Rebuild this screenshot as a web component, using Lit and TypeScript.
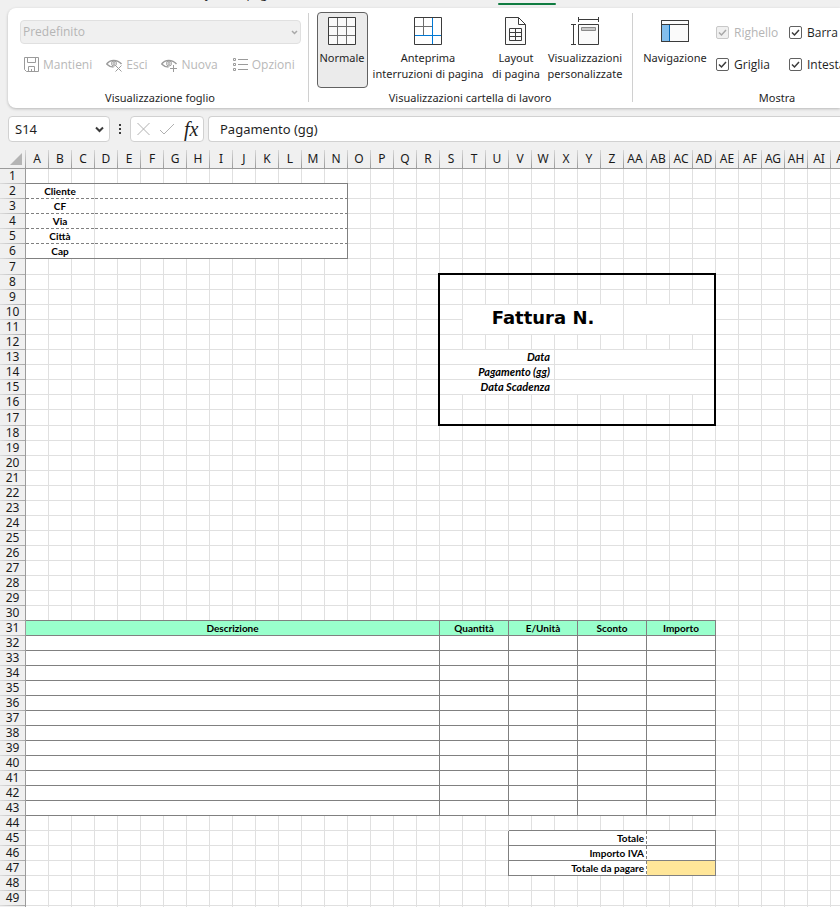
import { LitElement, html, css, svg, nothing } from "lit";
import { customElement } from "lit/decorators.js";
import { classMap } from "lit/directives/class-map.js";

type Cell = { c: number; span: number; rows?: number; text?: string; cls?: string };

const COLS = 36;

const colName = (n: number): string =>
  n > 26 ? "A" + String.fromCharCode(64 + n - 26) : String.fromCharCode(64 + n);

const merged: Record<number, Cell[]> = {};
const put = (row: number, ...cells: Cell[]) => {
  merged[row] = [...(merged[row] ?? []), ...cells];
};

["Cliente", "CF", "Via", "Città", "Cap"].forEach((text, i) => {
  const edge = i === 4 ? "solid-b" : "dash-b";
  put(2 + i, { c: 1, span: 3, text, cls: `center ${edge}` }, { c: 4, span: 11, cls: `${edge} solid-r` });
});
put(10, { c: 20, span: 7, rows: 2, text: "Fattura N.", cls: "title" }, { c: 27, span: 4, rows: 2, cls: "thick-r" });
["Data", "Pagamento (gg)", "Data Scadenza"].forEach((text, i) =>
  put(13 + i, { c: 19, span: 5, text, cls: "right italic" }, { c: 24, span: 7, cls: "thick-r" })
);
for (let r = 31; r <= 43; r++) {
  const head = r === 31;
  ["Descrizione", "Quantità", "E/Unità", "Sconto", "Importo"].forEach((text, i) =>
    put(r, {
      c: i ? 16 + i * 3 : 1,
      span: i ? 3 : 18,
      text: head ? text : undefined,
      cls: `center solid-b solid-r${head ? " mint" : ""}`,
    })
  );
}
["Totale", "Importo IVA", "Totale da pagare"].forEach((text, i) =>
  put(
    45 + i,
    { c: 22, span: 6, text, cls: "right solid-b dash-r" },
    { c: 28, span: 3, cls: `solid-b solid-r${i === 2 ? " amber" : ""}` }
  )
);

/* Borders that plain cells carry on behalf of a neighbouring block. */
const edges = (r: number, c: number): string => {
  const out: string[] = [];
  if (r === 1 && c <= 14) out.push("solid-b");
  if (r === 30 && c <= 30) out.push("solid-b");
  if (r === 44 && c >= 22 && c <= 30) out.push("solid-b");
  if (r >= 45 && r <= 47 && c === 21) out.push("solid-r");
  if ((r === 7 || r === 17) && c >= 19 && c <= 30) out.push("thick-b");
  if (r >= 8 && r <= 17 && (c === 18 || c === 30)) out.push("thick-r");
  if (r === 7 && c === 18) out.push("corner");
  return out.join(" ");
};

const rowCells = (r: number) => {
  const out: unknown[] = [];
  for (let c = 1; c <= COLS; ) {
    if (r === 11 && c === 20) {
      c = 31;
      continue;
    }
    const m = merged[r]?.find((x) => x.c === c);
    if (m) {
      out.push(html`<td class=${m.cls ?? ""} colspan=${m.span} rowspan=${m.rows ?? 1}>${m.text ?? nothing}</td>`);
      c += m.span;
    } else {
      out.push(html`<td class=${edges(r, c)}></td>`);
      c++;
    }
  }
  return out;
};

const icons = {
  save: svg`<path d="M1.500 1.500h14v14h-12l-2-2zM4.500 1.500v5h8v-5M5.500 15.500v-5h6v5M8.500 13v2.500" />`,
  eye: svg`<path stroke-width="1.500" d="M.5 8C4 3.500 11 3 15.500 8M.5 8c2 2 4 3 7 3" /><circle cx="8" cy="7.500" r="2.500" /><circle cx="8" cy="7.500" r="1" />`,
  list: svg`<path d="M1.500 2.500h2v2h-2zM1.500 7.500h2v2h-2zM1.500 12.500h2v2h-2zM6 3.500h10M6 8.500h10M6 13.500h10" />`,
};

@customElement("app-root")
export class AppRoot extends LitElement {
  static styles = css`
    :host {
      display: block;
      height: 100vh;
      overflow: hidden;
      background: #f0f0f0;
      color: #1f1f1f;
      font: 12px/16px "Open Sans", "Noto Sans", sans-serif;
    }
    button, input, select {
      font: inherit;
      color: inherit;
      margin: 0;
      box-sizing: border-box;
    }
    button {
      padding: 0;
      border: 0;
      background: none;
    }
    svg {
      display: block;
      flex: none;
      fill: none;
      stroke: #3b3b3b;
    }
    .tabs {
      display: flex;
      align-items: flex-end;
      height: 8px;
      overflow: hidden;
    }
    .tabs a {
      color: inherit;
      text-decoration: none;
      height: 18px;
      margin: 0 0 4px 192px;
      width: 106px;
      flex: none;
    }
    .tabs .active {
      margin: 0 0 3px 200px;
      width: 58px;
      height: 2px;
      background: #107c41;
      border-radius: 1px;
    }
    .ribbon {
      display: flex;
      height: 100px;
      margin-left: 8px;
      background: #fff;
      border-radius: 8px 0 0 8px;
      box-shadow: 0 1px 3px #0000003d;
      overflow: clip;
      overflow-clip-margin: 4px;
    }
    .group {
      display: flex;
      flex-direction: column;
      flex: none;
      box-sizing: border-box;
      padding-top: 4px;
    }
    .group + .group {
      position: relative;
    }
    .group + .group::before {
      content: "";
      position: absolute;
      left: 0;
      top: 5px;
      height: 89px;
      width: 1px;
      background: #d0d0d0;
    }
    .group > .body {
      height: 78px;
      display: flex;
    }
    .group > .name {
      text-align: center;
      font-family: "Noto Sans", sans-serif;
      font-size: 11px;
    }
    .views {
      width: 300px;
    }
    .views .body {
      flex-direction: column;
      padding: 8px 7px 0 12px;
      box-sizing: border-box;
      gap: 12px;
    }
    .views .name {
      padding-left: 4px;
    }
    .combo {
      position: relative;
      display: block;
    }
    .combo select {
      appearance: none;
      display: block;
      width: 100%;
      border: 1px solid #e0e0e0;
      border-radius: 4px;
      background: #f0f0f0;
      color: #b5b5b5;
      opacity: 1;
      height: 24px;
      padding: 0 2px;
    }
    .combo svg {
      position: absolute;
      right: 3px;
      top: 10px;
      stroke: #a8a8a8;
    }
    .row {
      display: flex;
      gap: 14px;
      padding-left: 3px;
    }
    .row button {
      display: flex;
      align-items: center;
      gap: 3px;
      color: #b8b8b8;
    }
    .row svg {
      stroke: #9b9b9b;
    }
    .modes {
      width: 324px;
    }
    .modes .body {
      padding-left: 9px;
    }
    .big {
      display: flex;
      flex-direction: column;
      align-items: center;
      box-sizing: border-box;
      height: 76px;
      flex: none;
      border: 1px solid transparent;
      border-radius: 4px;
      padding-top: 2px;
      white-space: nowrap;
      gap: 3px;
      font-family: "Noto Sans", sans-serif;
      font-size: 11px;
    }
    .big.on {
      background: #ebebeb;
      border-color: #616161;
      padding-right: 1px;
    }
    .big svg {
      height: 32px;
    }
    .big span {
      display: block;
      height: 32px;
    }
    .w51 { width: 51px; }
    .w120 { width: 120px; }
    .w56 { width: 56px; }
    .w82 { width: 82px; }
    .show {
      width: 290px;
    }
    .show .body {
      padding-left: 2px;
    }
    .show .checks {
      display: grid;
      grid-template-columns: 73px 130px;
      grid-auto-rows: 32px;
      padding-top: 4px;
    }
    .show label {
      display: flex;
      align-items: center;
      gap: 5px;
      height: 32px;
      white-space: nowrap;
    }
    .show label.off {
      color: #b5b5b5;
    }
    .caption {
      padding-top: 2px;
    }
    .show input {
      display: block;
      appearance: none;
      width: 13px;
      height: 13px;
      border: 1px solid #616161;
      border-radius: 2px;
      background: #fff;
    }
    .tick {
      position: relative;
      display: block;
      height: 13px;
    }
    .tick svg {
      position: absolute;
      left: 2px;
      top: 2px;
      pointer-events: none;
    }
    .show .off input {
      border-color: #c8c8c8;
      background: #f0f0f0;
    }
    .off svg {
      stroke: #a8a8a8;
    }
    .formula {
      display: flex;
      padding: 8px 0 0 8px;
      height: 42px;
      box-sizing: border-box;
      font-family: "Noto Sans", sans-serif;
      font-size: 13px;
    }
    .box {
      display: flex;
      align-items: center;
      box-sizing: border-box;
      height: 26px;
      border: 1px solid #d1d1d1;
      border-radius: 4px;
      background: #fff;
    }
    .box input {
      border: 0;
      outline: 0;
      padding: 0;
      background: none;
      min-width: 0;
      flex: 1;
    }
    .where {
      width: 102px;
      padding: 0 5px 0 6px;
    }
    .dots {
      width: 20px;
      height: 26px;
    }
    .fx {
      width: 74px;
      gap: 9px;
      padding-left: 6px;
      margin-right: 4px;
    }
    .fx .fn {
      font: italic 20px/20px "Liberation Serif", serif;
      color: #222;
    }
    .entry {
      flex: 1;
      border-right: 0;
      border-radius: 4px 0 0 4px;
      padding-left: 11px;
    }
    table {
      table-layout: fixed;
      width: 854px;
      border-collapse: separate;
      border-spacing: 0;
      background: #fff;
      color: #000;
      font-family: "Noto Sans", sans-serif;
    }
    .c0 { width: 26px; }
    .cn { width: 23px; }
    th, td {
      box-sizing: border-box;
      padding: 0;
      font-weight: 400;
      white-space: nowrap;
      overflow: hidden;
    }
    th {
      color: #1a1a1a;
      font-size: 12px;
    }
    thead th {
      height: 19px;
      line-height: 18px;
      border-bottom: 1px solid #9b9b9b;
      padding-right: 1px;
      background: linear-gradient(#d8d8d8, #9b9b9b) right top / 1px 100% no-repeat #f0f0f0;
    }
    .all svg {
      margin-left: 10px;
      fill: #b4b4b4;
      stroke: none;
    }
    tbody th {
      padding-bottom: 1px;
      border-right: 1px solid #9b9b9b;
      line-height: 14px;
      background: linear-gradient(90deg, #dcdcdc, #a8a8a8) left bottom / 100% 1px no-repeat #f0f0f0;
    }
    tbody tr {
      height: 15px;
    }
    tbody tr.tall {
      height: 16px;
    }
    td {
      --line: #e0e0e0;
      --below: linear-gradient(var(--line), var(--line)) left bottom / 100% 1px no-repeat;
      --beside: linear-gradient(var(--line), var(--line)) right top / 1px 100% no-repeat;
      --fill: #fff;
      padding: 0 1px 1px 0;
      background: var(--beside), var(--below), var(--fill);
      font: bold 10px/14px Lato, sans-serif;
    }
    .center { text-align: center; }
    .right {
      text-align: right;
      padding-right: 3px;
    }
    .italic {
      font-size: 11px;
      font-style: italic;
      padding-right: 5px;
    }
    .title {
      text-align: center;
      padding-bottom: 4px;
      font: bold 18px/24px "DejaVu Sans", sans-serif;
    }
    .solid-b, .dash-b, .thick-b {
      background: var(--below), var(--beside), var(--fill);
    }
    .solid-b { --below: linear-gradient(#808080, #808080) left bottom / 100% 1px no-repeat; }
    .solid-r { --beside: linear-gradient(#808080, #808080) right top / 1px 100% no-repeat; }
    .dash-b {
      --below: repeating-linear-gradient(90deg, #808080 0 3px, transparent 3px 5px) left bottom / 100% 1px no-repeat;
    }
    .dash-r {
      --beside: repeating-linear-gradient(#808080 0 3px, transparent 3px 5px) right top / 1px 100% no-repeat;
    }
    .thick-b { --below: linear-gradient(#000, #000) left bottom / 100% 2px no-repeat; }
    .thick-r { --beside: linear-gradient(#000, #000) right top / 2px 100% no-repeat; }
    .corner {
      background: linear-gradient(#000, #000) right bottom / 2px 2px no-repeat, var(--beside), var(--below), var(--fill);
    }
    .mint { --fill: #99ffcc; }
    .amber { --fill: #ffe699; }
  `;

  private check(label: string, off = false) {
    return html`<label class=${classMap({ off })}>
      <span class="tick"
        ><input type="checkbox" checked ?disabled=${off} /><svg width="9" height="9"><path stroke-width="1.500" d="M1 4.500l2.500 2.500l4.500-5" /></svg></span
      ><span class="caption">${label}</span>
    </label>`;
  }

  render() {
    return html`
      <nav class="tabs"><a href="#layout">Layout di pagina</a><div class="active"></div></nav>
      <section class="ribbon">
        <div class="group views">
          <div class="body">
            <label class="combo">
              <select disabled aria-label="Visualizzazione foglio"><option>Predefinito</option></select>
              <svg width="7" height="6"><path stroke-width="1.500" d="M1 1l2.500 2.500l2.500-2.500" /></svg>
            </label>
            <div class="row">
              <button disabled><svg width="17" height="17">${icons.save}</svg>Mantieni</button>
              <button disabled><svg width="17" height="17">${icons.eye}<path d="M9.500 9.500l6 6M15.500 9.500l-6 6" /></svg>Esci</button>
              <button disabled><svg width="17" height="17">${icons.eye}<path d="M12.500 9v7M9 12.500h7" /></svg>Nuova</button>
              <button disabled><svg width="17" height="17">${icons.list}</svg>Opzioni</button>
            </div>
          </div>
          <div class="name">Visualizzazione foglio</div>
        </div>
        <div class="group modes">
          <div class="body">
            <button class="big on w51">
              <svg width="28" height="32"><path fill="#fafafa" d="M.5 2.500h27v27h-27z" /><path stroke="#6e6e6e" d="M9.500 3v26M18.500 3v26M1 11.500h26M1 20.500h26" /></svg>
              <span>Normale</span>
            </button>
            <button class="big w120">
              <svg width="28" height="32"><path stroke="#6e6e6e" d="M9.500 3v17M1 11.500h17" /><path stroke="#0078d4" d="M18.500 3v26M1 20.500h26" /><path d="M.5 2.500h27v27h-27z" /></svg>
              <span>Anteprima<br />interruzioni di pagina</span>
            </button>
            <button class="big w56">
              <svg width="22" height="32"><path fill="#fafafa" d="M.5 2.500h13l7 7v20h-20zM13.500 2.500v7h7" /><path d="M4.500 13.500h12v12h-12zM4.500 17.500h12M4.500 21.500h12M10.500 13.500v12" /></svg>
              <span>Layout<br />di pagina</span>
            </button>
            <button class="big w82">
              <svg width="30" height="32"><path fill="#fafafa" d="M8.500 9.500h20v20h-20z" /><path d="M8.500 2v5M28.500 2v5M8.500 4.500h20M1 9.500h5M1 29.500h5M3.500 9.500v20" /><path fill="#c8c8c8" stroke="#8a8a8a" d="M11.500 12.500h14v3h-14z" /></svg>
              <span>Visualizzazioni<br />personalizzate</span>
            </button>
          </div>
          <div class="name">Visualizzazioni cartella di lavoro</div>
        </div>
        <div class="group show">
          <div class="body">
            <button class="big w82">
              <svg width="28" height="32"><path fill="#fafafa" d="M.5 5.500h27v21h-27z" /><path fill="#83beec" stroke="none" d="M1 10h7v16h-7z" /><path stroke="#0063b1" d="M8.500 10v16" /><path d="M0 9.500h28M.5 5.500h27v21h-27z" /></svg>
              <span>Navigazione</span>
            </button>
            <div class="checks">
              ${this.check("Righello", true)}${this.check("Barra della formula")} ${this.check("Griglia")}${this.check("Intestazioni")}
            </div>
          </div>
          <div class="name">Mostra</div>
        </div>
      </section>
      <section class="formula">
        <div class="box where">
          <input aria-label="Casella nome" value="S14" />
          <svg width="9" height="8" stroke-width="2"><path d="M1 2.500l3.500 3.500l3.500-3.500" /></svg>
        </div>
        <svg class="dots" viewBox="0 0 20 26"><path stroke-width="2" d="M9 9h2M9 13h2M9 17h2" /></svg>
        <div class="box fx">
          <button aria-label="Annulla"><svg width="13" height="14"><path stroke="#b0b0b0" d="M.5 1l12 12M12.500 1l-12 12" /></svg></button>
          <button aria-label="Invio"><svg width="16" height="14"><path stroke="#b0b0b0" d="M1 8l4 4l10-10" /></svg></button>
          <button class="fn">fx</button>
        </div>
        <div class="box entry"><input aria-label="Barra della formula" value="Pagamento (gg)" /></div>
      </section>
      <table>
        <colgroup><col class="c0" />${Array.from({ length: COLS }, () => html`<col class="cn" />`)}</colgroup>
        <thead>
          <tr>
            <th class="all"><svg width="12" height="12"><path d="M12 0v12h-12z" /></svg></th>
            ${Array.from({ length: COLS }, (_, i) => html`<th>${colName(i + 1)}</th>`)}
          </tr>
        </thead>
        <tbody>
          ${Array.from({ length: 50 }, (_, i) => i + 1).map(
            (r) => html`<tr class=${classMap({ tall: r === 7 || r === 17 })}><th>${r}</th>${rowCells(r)}</tr>`
          )}
        </tbody>
      </table>
    `;
  }
}
